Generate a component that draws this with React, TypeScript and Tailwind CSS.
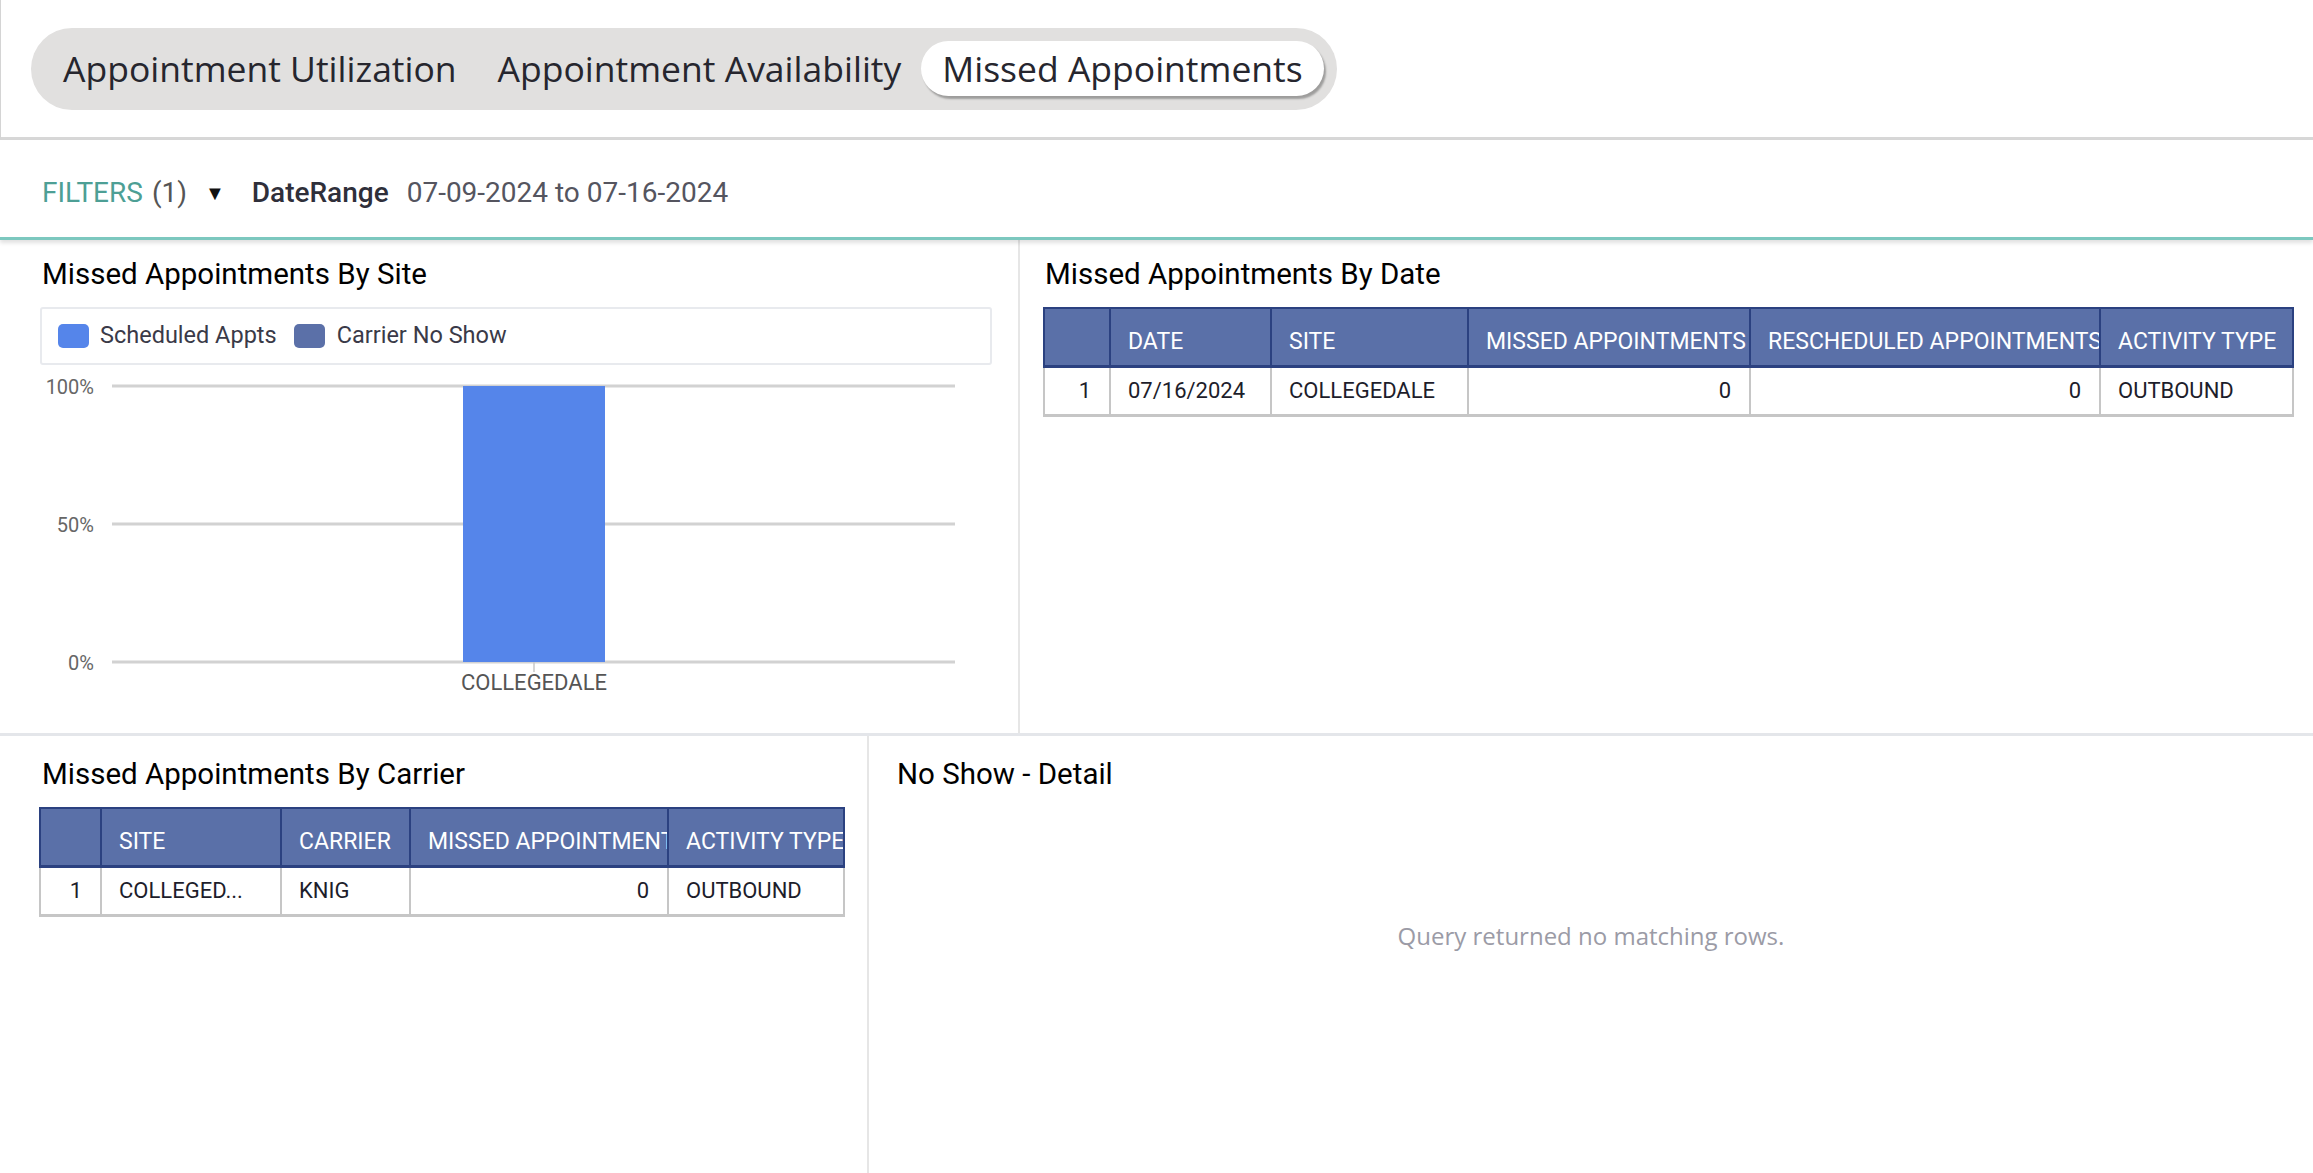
import React from "react"

const din = { fontFamily: "Roboto, 'Liberation Sans', sans-serif" }
const open = { fontFamily: "'Open Sans', 'Noto Sans', sans-serif" }

type Col = { label: string; w: number; align?: "right" }

function DataTable({ cols, rows }: { cols: Col[]; rows: string[][] }) {
    return (
        <table
            className="table-fixed border-collapse text-[22px]"
            style={{ ...din, width: cols.reduce((a, c) => a + c.w, 0) }}
        >
            <colgroup>
                {cols.map((c, i) => (
                    <col key={i} style={{ width: c.w }} />
                ))}
            </colgroup>
            <thead>
                <tr className="h-[58px] bg-[#5a70a8] text-white text-[23px]">
                    {cols.map((c, i) => (
                        <th
                            key={i}
                            className="border-2 border-b-[3px] border-[#2b4180] pl-[17px] pr-0 pt-[10px] text-left font-normal whitespace-nowrap overflow-hidden text-clip"
                        >
                            {c.label}
                        </th>
                    ))}
                </tr>
            </thead>
            <tbody>
                {rows.map((r, ri) => (
                    <tr key={ri} className="h-[49px] text-[#1d1d2b]">
                        {r.map((v, i) => (
                            <td
                                key={i}
                                className={`border-2 border-b-[3px] border-[#c6c6c6] whitespace-nowrap overflow-hidden text-ellipsis ${
                                    i === 0 || cols[i].align === "right"
                                        ? "text-right pr-[18px]"
                                        : "text-left pl-[17px]"
                                }`}
                            >
                                {v}
                            </td>
                        ))}
                    </tr>
                ))}
            </tbody>
        </table>
    )
}

function SiteChart() {
    return (
        <svg width="930" height="330" className="block" style={din}>
            {[15, 153, 291].map((y) => (
                <line key={y} x1="72" x2="915" y1={y} y2={y} stroke="#d2d2d2" strokeWidth="3" />
            ))}
            <rect x="423" y="15" width="142" height="276" fill="#5585ea" />
            <line x1="494" x2="494" y1="291" y2="301" stroke="#c8c8c8" strokeWidth="1.5" />
            <g fill="#666" fontSize="20" textAnchor="end">
                <text x="54" y="23">100%</text>
                <text x="54" y="161">50%</text>
                <text x="54" y="299">0%</text>
            </g>
            <text x="494" y="319" fill="#555" fontSize="22" textAnchor="middle">
                COLLEGEDALE
            </text>
        </svg>
    )
}

export default function App() {
    return (
        <div className="w-full h-[1173px] bg-white flex flex-col overflow-hidden">
            {/* Tabs */}
            <div className="h-[140px] shrink-0 flex items-center pl-[30px] border-l border-[#d4d4d4] border-b-[3px] border-b-[#d7d7d7]">
                <div
                    className="h-[82px] flex items-center rounded-full bg-[#e1e0df] pl-[32px] pr-[13px] text-[35.5px] font-medium text-[#26262e]"
                    style={open}
                >
                    <span>Appointment Utilization</span>
                    <span className="ml-[41px]">Appointment Availability</span>
                    <span className="ml-[20px] h-[55px] flex items-center rounded-full bg-white px-[21px] shadow-[2px_3px_2px_rgba(0,0,0,0.3)]">
                        Missed Appointments
                    </span>
                </div>
            </div>

            {/* Filters */}
            <div
                className="h-[100px] shrink-0 flex items-center pl-[42px] pt-[8px] text-[28px] border-b-[3px] border-[#7cc8bf] shadow-[0_3px_4px_rgba(0,0,0,0.12)] relative z-10"
                style={din}
            >
                <span className="text-[#4d9f95]">FILTERS</span>
                <span className="ml-[9px] text-[#555]">(1)</span>
                <span className="ml-[18px] text-[20px] text-[#111]">▼</span>
                <span className="ml-[27px] font-medium text-[#2f2f3a]">DateRange</span>
                <span className="ml-[18px] text-[#55555f]">07-09-2024 to 07-16-2024</span>
            </div>

            {/* Top row */}
            <div className="h-[496px] shrink-0 flex border-b-[3px] border-[#e4e6ea]">
                <div className="w-[1020px] shrink-0 border-r-2 border-[#e6e6e6] pl-[40px] pr-[26px] pt-[14px]">
                    <h2 className="text-[29.5px] text-black leading-[40px] pl-[2px]" style={din}>
                        Missed Appointments By Site
                    </h2>
                    <div
                        className="mt-[13px] h-[58px] flex items-center border-2 border-[#e8eaee] rounded-[3px] pl-[16px] text-[23.5px] text-[#3a3a48]"
                        style={din}
                    >
                        <span className="w-[31px] h-[24px] rounded-[5px] bg-[#5585ea]" />
                        <span className="ml-[11px]">Scheduled Appts</span>
                        <span className="ml-[17px] w-[31px] h-[24px] rounded-[5px] bg-[#5b70a8]" />
                        <span className="ml-[12px]">Carrier No Show</span>
                    </div>
                    <div className="mt-[6px]">
                        <SiteChart />
                    </div>
                </div>
                <div className="flex-1 pl-[23px] pt-[14px]">
                    <h2 className="text-[29.5px] text-black leading-[40px] pl-[2px]" style={din}>
                        Missed Appointments By Date
                    </h2>
                    <div className="mt-[13px]">
                        <DataTable
                            cols={[
                                { label: "", w: 66 },
                                { label: "DATE", w: 161 },
                                { label: "SITE", w: 197 },
                                { label: "MISSED APPOINTMENTS", w: 282, align: "right" },
                                { label: "RESCHEDULED APPOINTMENTS", w: 350, align: "right" },
                                { label: "ACTIVITY TYPE", w: 193 },
                            ]}
                            rows={[["1", "07/16/2024", "COLLEGEDALE", "0", "0", "OUTBOUND"]]}
                        />
                    </div>
                </div>
            </div>

            {/* Bottom row */}
            <div className="flex-1 flex">
                <div className="w-[869px] shrink-0 border-r-2 border-[#e6e6e6] pl-[39px] pt-[18px]">
                    <h2 className="text-[29.5px] text-black leading-[40px] pl-[3px]" style={din}>
                        Missed Appointments By Carrier
                    </h2>
                    <div className="mt-[13px]">
                        <DataTable
                            cols={[
                                { label: "", w: 61 },
                                { label: "SITE", w: 180 },
                                { label: "CARRIER", w: 129 },
                                { label: "MISSED APPOINTMENTS", w: 258, align: "right" },
                                { label: "ACTIVITY TYPE", w: 176 },
                            ]}
                            rows={[["1", "COLLEGED...", "KNIG", "0", "OUTBOUND"]]}
                        />
                    </div>
                </div>
                <div className="flex-1 flex flex-col pt-[18px]">
                    <h2 className="text-[29.5px] text-black leading-[40px] pl-[28px]" style={din}>
                        No Show - Detail
                    </h2>
                    <div className="pt-[124px] text-center text-[24px] text-[#9b9ba6]" style={open}>
                        Query returned no matching rows.
                    </div>
                </div>
            </div>
        </div>
    )
}
